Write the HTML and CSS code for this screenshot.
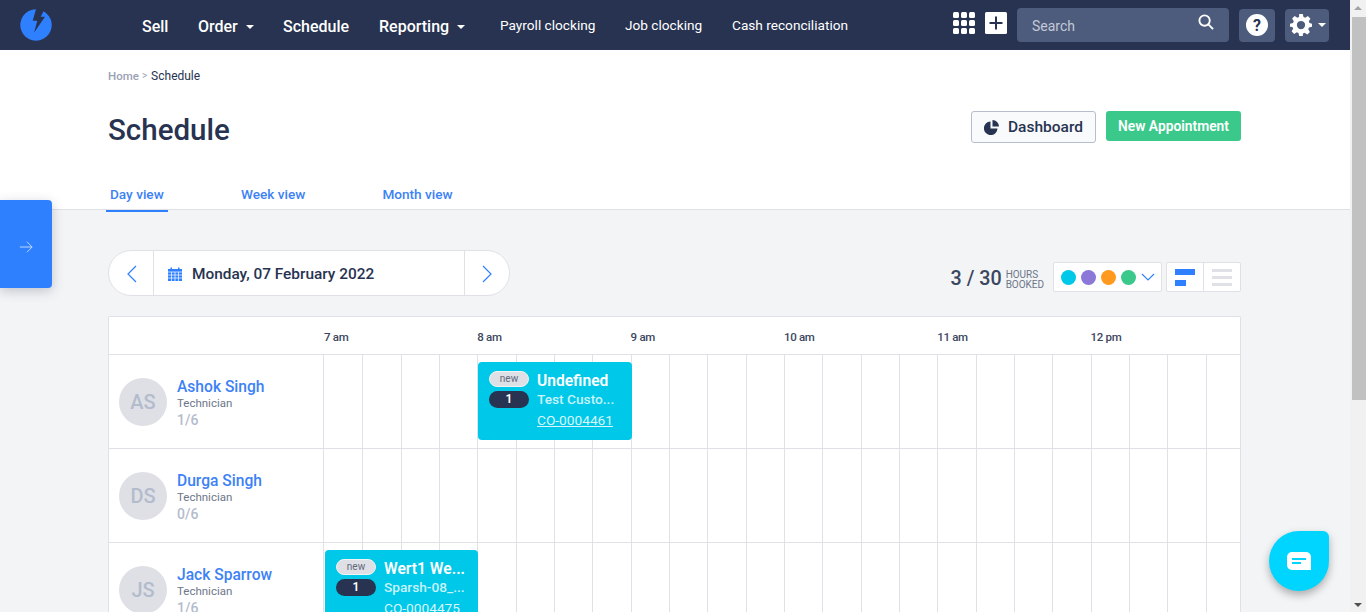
FILE: index.html
```html
<!DOCTYPE html>
<html lang="en">
<head>
<meta charset="utf-8">
<title>Schedule</title>
<link rel="stylesheet" href="styles.css">
</head>
<body>
<div class="app">
  <div class="page">
    <header class="nav">
      <svg class="logo" width="32" height="32" viewBox="0 0 32 32"><path fill="#2f80ff" d="M23.500 2.200L20.700 7.700L25 7.700L14 23.700L17.300 11.700L12.700 11.700L16 .3A15.700 15.700 0 1 0 23.500 2.200Z"/></svg>
      <nav class="menu">
        <a class="mi strong w-sell">Sell</a>
        <a class="mi strong w-order">Order<i class="caret"></i></a>
        <a class="mi strong w-sched">Schedule</a>
        <a class="mi strong w-report">Reporting<i class="caret"></i></a>
        <a class="mi w-payroll">Payroll clocking</a>
        <a class="mi w-job">Job clocking</a>
        <a class="mi w-cash">Cash reconciliation</a>
      </nav>
      <div class="tools">
        <svg class="grid-ic" width="22" height="22" viewBox="0 0 22 22" fill="#fff"><rect x="0" y="0" width="6" height="6" rx="1.500"/><rect x="8" y="0" width="6" height="6" rx="1.500"/><rect x="16" y="0" width="6" height="6" rx="1.500"/><rect x="0" y="8" width="6" height="6" rx="1.500"/><rect x="8" y="8" width="6" height="6" rx="1.500"/><rect x="16" y="8" width="6" height="6" rx="1.500"/><rect x="0" y="16" width="6" height="6" rx="1.500"/><rect x="8" y="16" width="6" height="6" rx="1.500"/><rect x="16" y="16" width="6" height="6" rx="1.500"/></svg>
        <svg class="plus-ic" width="22" height="22" viewBox="0 0 22 22"><rect width="22" height="22" rx="1.500" fill="#fff"/><path d="M11 4.500v13M4.500 11h13" stroke="#273350" stroke-width="2"/></svg>
        <div class="search"><span>Search</span>
          <svg width="16" height="16" viewBox="0 0 17 17" fill="none" stroke="#fff" stroke-width="2"><circle cx="7" cy="7" r="5.500"/><path d="M11 11l5 5"/></svg>
        </div>
        <div class="sq help"><svg width="22" height="22" viewBox="0 0 22 22"><circle cx="11" cy="11" r="11" fill="#fff"/><text x="11" y="17" class="qm">?</text></svg></div>
        <div class="sq gear"><svg width="22" height="22" viewBox="0 0 24 24"><path fill="#fff" fill-rule="evenodd" d="M10 0h4l.7 3.300 1.900.8 2.900-1.800 2.800 2.800-1.800 2.900.8 1.900L24 10.500v3.500l-3.300.7-.8 1.900 1.800 2.900-2.800 2.800-2.900-1.800-1.900.8L14 24h-4l-.7-3.300-1.900-.8-2.900 1.800-2.800-2.800 1.800-2.900-.8-1.900L0 14v-3.500l3.300-.7.8-1.900L2.300 5 5.100 2.200 8 4l1.900-.8zM12 7.500a4.500 4.500 0 1 0 0 9 4.500 4.500 0 0 0 0-9z"/></svg><i class="caret"></i></div>
      </div>
    </header>

    <section class="head">
      <div class="crumbs"><span class="c-home">Home</span><span class="c-sep">&gt;</span><span class="c-cur">Schedule</span></div>
      <div class="title-row">
        <h1>Schedule</h1>
        <div class="actions">
          <button class="btn-outline"><svg width="15" height="15" viewBox="0 0 15 15" fill="#273350"><path d="M6.500 1.500v7h7a6.800 6.800 0 1 1-7-7z"/><path d="M8.500 0a6.500 6.500 0 0 1 6.500 6.500h-6.500z"/></svg>Dashboard</button>
          <button class="btn-green">New Appointment</button>
        </div>
      </div>
      <div class="tabs">
        <a class="tab on">Day view</a>
        <a class="tab">Week view</a>
        <a class="tab">Month view</a>
      </div>
    </section>

    <section class="content">
      <div class="toolbar">
        <div class="pager">
          <span class="pg-btn"><svg width="11" height="18" viewBox="0 0 11 18" fill="none" stroke="#2f80ff" stroke-width="1.200"><path d="M10 1L2 9l8 8"/></svg></span>
          <span class="pg-date">
            <svg width="14" height="14" viewBox="0 0 14 14"><path fill="#2f80ff" d="M0 2h2.500V0.500h1.500V2h6V0.500h1.500V2H14v12H0z"/><path stroke="#fff" stroke-width=".7" d="M0 5h14M0 8h14M0 11h14M3.500 5v9M7 5v9M10.500 5v9"/></svg>
            Monday, 07 February 2022</span>
          <span class="pg-btn"><svg width="11" height="18" viewBox="0 0 11 18" fill="none" stroke="#2f80ff" stroke-width="1.200"><path d="M1 1l8 8-8 8"/></svg></span>
        </div>
        <div class="right-tools">
          <span class="booked-num">3 / 30</span>
          <span class="booked-lbl">HOURS<br>BOOKED</span>
          <div class="box dots">
            <i class="dot c1"></i><i class="dot c2"></i><i class="dot c3"></i><i class="dot c4"></i>
            <svg width="14" height="8" viewBox="0 0 14 8" fill="none" stroke="#2f80ff" stroke-width="1.100"><path d="M1 1l6 6 6-6"/></svg>
          </div>
          <div class="box views">
            <span class="vw"><svg width="20" height="17" viewBox="0 0 20 17" fill="#2f80ff"><rect width="20" height="6"/><rect y="11" width="11" height="6"/></svg></span>
            <span class="vw"><svg width="20" height="17" viewBox="0 0 20 17" fill="#e0e1e6"><rect width="20" height="3"/><rect y="7" width="20" height="3"/><rect y="14" width="20" height="3"/></svg></span>
          </div>
        </div>
      </div>

      <div class="sched">
        <div class="row hdr">
          <div class="who"></div>
          <div class="hours">
            <span>7 am</span><span>8 am</span><span>9 am</span><span>10 am</span><span>11 am</span><span>12 pm</span>
          </div>
        </div>
        <div class="row">
          <div class="who"><span class="av">AS</span><div class="inf"><b>Ashok Singh</b><small>Technician</small><em>1/6</em></div></div>
          <div class="slots">
            <i></i><i></i><i></i><i></i><i></i><i></i><i></i><i></i><i></i><i></i><i></i><i></i><i></i><i></i><i></i><i></i><i></i><i></i><i></i><i></i><i></i><i></i><i></i><i></i>
            <div class="evt e1">
              <div class="pills"><span class="p-new">new</span><span class="p-num">1</span></div>
              <div class="etx"><b>Undefined</b><span>Test Custo...</span><a>CO-0004461</a></div>
            </div>
          </div>
        </div>
        <div class="row">
          <div class="who"><span class="av">DS</span><div class="inf"><b>Durga Singh</b><small>Technician</small><em>0/6</em></div></div>
          <div class="slots">
            <i></i><i></i><i></i><i></i><i></i><i></i><i></i><i></i><i></i><i></i><i></i><i></i><i></i><i></i><i></i><i></i><i></i><i></i><i></i><i></i><i></i><i></i><i></i><i></i>
          </div>
        </div>
        <div class="row">
          <div class="who"><span class="av">JS</span><div class="inf"><b>Jack Sparrow</b><small>Technician</small><em>1/6</em></div></div>
          <div class="slots">
            <i></i><i></i><i></i><i></i><i></i><i></i><i></i><i></i><i></i><i></i><i></i><i></i><i></i><i></i><i></i><i></i><i></i><i></i><i></i><i></i><i></i><i></i><i></i><i></i>
            <div class="evt e2">
              <div class="pills"><span class="p-new">new</span><span class="p-num">1</span></div>
              <div class="etx"><b>Wert1 We...</b><span>Sparsh-08_...</span><a>CO-0004475</a></div>
            </div>
          </div>
        </div>
      </div>
    </section>

    <button class="side-toggle"><svg width="14" height="14" viewBox="0 0 16 14" fill="none" stroke="#cfe0ff" stroke-width="1"><path d="M1 7h14M9 1l6 6-6 6"/></svg></button>
    <div class="chat"><svg width="24" height="18" viewBox="0 0 24 18"><path fill="#fff" d="M5 0h14a5 5 0 0 1 5 5v13H5a5 5 0 0 1-5-5V5a5 5 0 0 1 5-5z"/><path fill="#00d5ff" d="M5 6h14v2H5zM5 10h9v2H5z"/></svg></div>
  </div>
  <div class="scrollbar">
    <span class="arrow up"></span>
    <span class="thumb"></span>
    <span class="arrow down"></span>
  </div>
</div>
</body>
</html>
```
FILE: styles.css
```css
* { box-sizing: border-box; }
html, body { margin: 0; height: 100%; overflow: hidden; }
body { font-family: Roboto, "Liberation Sans", sans-serif; color: #273350; background: #f3f4f6; }
.app { display: flex; height: 612px; overflow: hidden; }
.page { position: relative; flex: 1; min-width: 0; display: flex; flex-direction: column; overflow: hidden; }

.scrollbar { width: 16px; background: #f1f1f1; display: flex; flex-direction: column; align-items: center; position: relative; }
.thumb { position: absolute; top: 17px; left: 2px; width: 14px; height: 383px; background: #c1c1c1; }
.arrow { position: absolute; left: 4px; width: 0; height: 0; border-left: 4px solid transparent; border-right: 4px solid transparent; }
.arrow.up { top: 6px; border-bottom: 4px solid #a3a3a3; }
.arrow.down { bottom: 5px; border-top: 4px solid #505050; }

.nav { height: 50px; flex: none; background: #273350; display: flex; align-items: center; padding: 0 21px 0 20px; }
.logo { flex: none; }
.menu { display: flex; align-items: center; margin-left: 90px; color: #fff; }
.mi { font-size: 13.65px; color: #fff; white-space: nowrap; display: flex; align-items: center; }
.mi.strong { font-size: 16px; font-weight: 500; margin-top: 3px; }
.w-sell { width: 56px; }
.w-order { width: 85px; }
.w-sched { width: 96px; }
.w-report { width: 121px; }
.w-payroll { width: 125px; }
.w-job { width: 107px; }
.caret { display: inline-block; width: 0; height: 0; margin-left: 8px; border-left: 4px solid transparent; border-right: 4px solid transparent; border-top: 4px solid #fff; }
.tools { margin-left: auto; display: flex; align-items: center; }
.grid-ic { margin-right: 10px; margin-top: -4px; }
.plus-ic { margin-right: 10px; margin-top: -4px; }
.search { width: 212px; height: 34px; margin-top: -1px; background: #4d5c7c; border-radius: 4px; display: flex; align-items: center; justify-content: space-between; padding: 0 15px 0 15px; color: #c3c9d6; font-size: 14px; }
.search span { margin-top: 2px; }
.search svg { margin-top: -5px; }
.sq { height: 33px; background: #4d5c7c; border-radius: 4px; display: flex; align-items: center; justify-content: center; }
.help { width: 36px; margin-left: 10px; }
.gear { width: 44px; margin-left: 10px; padding-left: 1px; }
.gear .caret { margin-left: 6px; }
.qm { font: 700 16px Roboto, sans-serif; fill: #273350; text-anchor: middle; }

.head { background: #fff; height: 160px; flex: none; border-bottom: 1px solid #e0e1e6; padding: 19px 0 0 108px; position: relative; display: flex; flex-direction: column; }
.crumbs { font-size: 11.5px; line-height: 14px; display: flex; align-items: center; }
.c-home { color: #9aa2b4; font-weight: 500; }
.c-sep { color: #9aa2b4; margin: 0 4px 0 3px; font-size: 10px; }
.c-cur { font-size: 12px; }
.title-row { display: flex; align-items: flex-start; justify-content: space-between; padding-right: 109px; margin-top: 27px; }
h1 { margin: 0; font-size: 29.5px; font-weight: 500; line-height: 40px; color: #273350; }
.actions { display: flex; gap: 10px; margin-top: 1px; }
.btn-outline { width: 125px; height: 32px; background: #f9fafc; border: 1px solid #b6bdcd; border-radius: 3px; font: 500 15.5px Roboto, sans-serif; color: #273350; display: flex; align-items: center; gap: 9px; padding: 0 0 0 12px; }
.btn-green { width: 135px; height: 30px; background: #3ac98b; border: 0; border-radius: 3px; color: #fff; font: 600 13.8px Roboto, sans-serif; padding: 0; }
.tabs { display: flex; margin-top: auto; margin-left: -2px; }
.tab { font-size: 13.6px; font-weight: 500; color: #3d82f5; height: 27px; line-height: 18px; padding: 0 4px; margin-bottom: -3px; margin-right: 69px; white-space: nowrap; }
.tab.on { width: 62px; border-bottom: 2px solid #2f80ff; }

.content { flex: 1; min-height: 0; padding: 40px 109px 0 108px; display: flex; flex-direction: column; }
.toolbar { display: flex; justify-content: space-between; align-items: flex-start; height: 46px; flex: none; }
.pager { width: 402px; height: 46px; background: #fff; border: 1px solid #dfe1e6; border-radius: 23px; display: flex; align-items: stretch; }
.pg-btn { width: 44px; flex: none; display: flex; align-items: center; justify-content: center; padding-top: 2px; }
.pg-date { flex: 1; border-left: 1px solid #dfe1e6; border-right: 1px solid #dfe1e6; display: flex; align-items: center; gap: 10px; padding: 2px 0 0 14px; font-size: 15.4px; font-weight: 500; }
.right-tools { display: flex; align-items: center; height: 30px; margin-top: 12px; }
.booked-num { font-size: 19.7px; font-weight: 500; color: #3b465f; margin-right: 4px; margin-top: 2px; white-space: nowrap; }
.booked-lbl { font-size: 10px; letter-spacing: -.03px; line-height: 10px; color: #6d7689; margin-right: 9px; margin-top: 6px; }
.box { height: 30px; background: #fff; border: 1px solid #e0e1e6; border-radius: 2px; display: flex; align-items: center; }
.dots { width: 109px; padding-left: 7px; gap: 5px; margin-right: 4px; }
.dot { width: 15px; height: 15px; border-radius: 50%; }
.c1 { background: #00c8e8; }
.c2 { background: #8b78d8; }
.c3 { background: #ff9a1f; }
.c4 { background: #3ac98b; }
.views { width: 75px; }
.vw { flex: 1; height: 100%; display: flex; align-items: center; justify-content: center; }
.vw + .vw { border-left: 1px solid #e0e1e6; }

.sched { margin-top: 20px; background: #fff; border: 1px solid #e0e1e6; border-bottom: 0; border-radius: 2px 2px 0 0; flex: none; }
.row { display: flex; height: 94px; border-bottom: 1px solid #e0e1e6; }
.row.hdr { height: 38px; }
.who { width: 215px; flex: none; border-right: 1px solid #e0e1e6; display: flex; align-items: flex-start; padding: 23px 0 0 10px; gap: 10px; }
.hdr .who { border-right: 0; padding: 0; }
.hours { flex: 1; display: grid; grid-template-columns: repeat(6, 153.3px); font-size: 11.5px; letter-spacing: -.3px; font-weight: 500; color: #3b465f; align-items: center; padding-top: 3px; }
.av { width: 48px; height: 48px; border-radius: 50%; background: #dfe0e5; color: #b3bccd; font-size: 20px; font-weight: 500; display: flex; align-items: center; justify-content: center; flex: none; }
.inf { display: flex; flex-direction: column; }
.inf b { font-size: 15.6px; font-weight: 500; color: #3d82f5; line-height: 18px; white-space: nowrap; }
.inf small { font-size: 11.5px; color: #6d7689; line-height: 14px; }
.inf em { font-style: normal; font-size: 14px; font-weight: 500; color: #b3bccd; line-height: 20px; }
.slots { flex: 1; min-width: 0; display: grid; grid-template-columns: repeat(24, 38.33px); position: relative; overflow: hidden; }
.slots i { border-left: 1px solid #e0e1e6; }
.slots i:first-child { border-left: 0; }
.evt { position: absolute; height: 78px; background: #00c8e8; border-radius: 4px; display: flex; gap: 8px; padding: 9px 0 0 11px; color: #fff; }
.e1 { left: 154px; top: 7px; width: 154px; }
.e2 { left: 1px; top: 7px; width: 153px; }
.pills { display: flex; flex-direction: column; gap: 4px; width: 40px; flex: none; }
.p-new { height: 16px; border-radius: 8px; background: #dfe0e5; border: 1px solid #f2f3f5; color: #5f687c; font-size: 10px; line-height: 14px; text-align: center; }
.p-num { height: 17px; border-radius: 9px; background: #273350; color: #fff; font-size: 12px; font-weight: 600; line-height: 17px; text-align: center; }
.etx { display: flex; flex-direction: column; min-width: 0; white-space: nowrap; margin-top: 2px; }
.etx b { font-size: 15.6px; font-weight: 600; line-height: 17px; }
.etx span { font-size: 13.7px; font-weight: 500; color: #c8f3fa; line-height: 18px; }
.etx a { margin-top: 4px; font-size: 13.7px; color: #d8f6fb; text-decoration: underline; line-height: 16px; }

.side-toggle { position: absolute; left: 0; top: 200px; width: 52px; height: 88px; background: #2f80ff; border: 0; border-radius: 0 4px 4px 0; box-shadow: 0 3px 12px rgba(39,51,80,.25); display: flex; align-items: center; justify-content: center; padding: 6px 0 0; }
.chat { position: absolute; left: 1269px; top: 531px; width: 60px; height: 60px; background: #00d5ff; border-radius: 50% 6px 50% 50%; box-shadow: 0 4px 8px rgba(0,0,0,.3); display: flex; align-items: center; justify-content: center; }
```
